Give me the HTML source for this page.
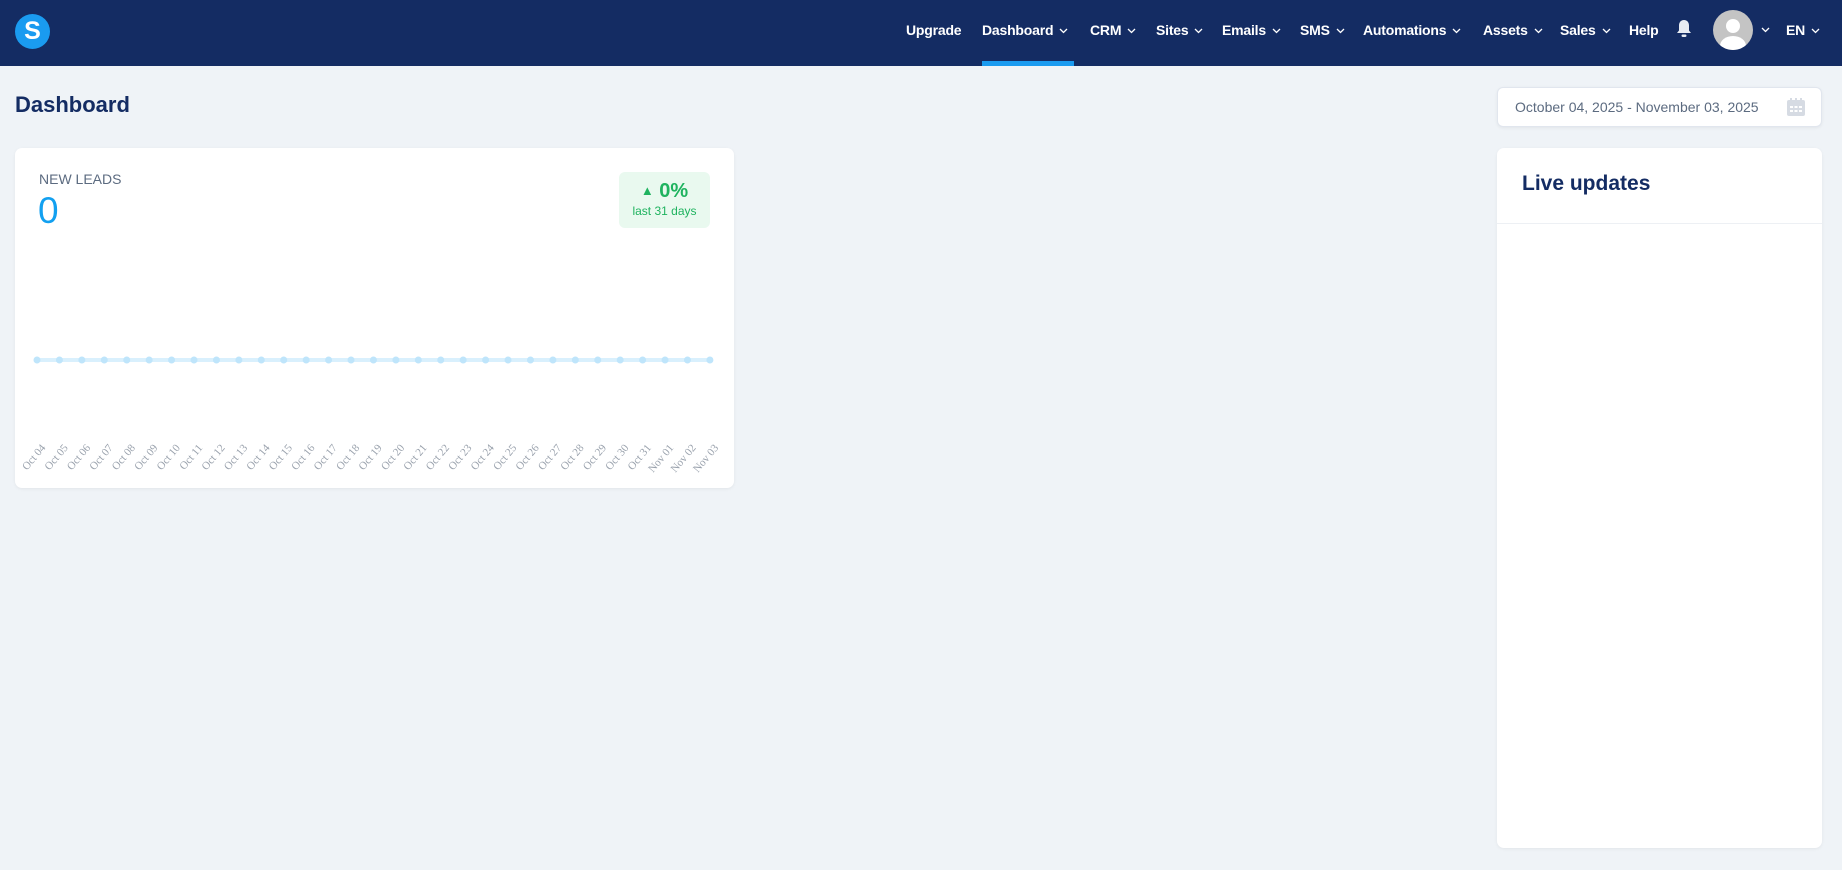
<!DOCTYPE html>
<html><head><meta charset="utf-8"><style>
*{margin:0;padding:0;box-sizing:border-box}
body{width:1842px;height:870px;background:#eff3f7;font-family:"Liberation Sans",sans-serif;position:relative;overflow:hidden}
.nav{position:absolute;left:0;top:0;width:1842px;height:66px;background:#142c63}
.logo{position:absolute;left:15px;top:14px;width:35px;height:35px;border-radius:50%;background:#1a9bf0;color:#fff;font-weight:bold;font-size:25px;text-align:center;line-height:35px}
.ni{position:absolute;top:20px;color:#fff;font-weight:bold;font-size:14px;line-height:20px;white-space:nowrap;letter-spacing:-0.2px}
.ni svg{vertical-align:middle;margin-left:6px}
.ul{position:absolute;left:982px;top:61px;width:92px;height:5px;background:#1a9bf0}
h1{position:absolute;left:15px;top:92px;font-size:22px;color:#142c63;font-weight:bold}
.card{position:absolute;background:#fff;border-radius:7px;box-shadow:0 1px 3px rgba(0,0,0,.06)}
</style></head><body>
<div class="nav">
<div class="logo">S</div>
<div class="ni" style="left:906px">Upgrade</div>
<div class="ni" style="left:982px">Dashboard<svg width="9" height="6"><path d="M1 1l3.5 3.5L8 1" stroke="#fff" fill="none" stroke-width="1.3"/></svg></div>
<div class="ni" style="left:1090px">CRM<svg width="9" height="6"><path d="M1 1l3.5 3.5L8 1" stroke="#fff" fill="none" stroke-width="1.3"/></svg></div>
<div class="ni" style="left:1156px">Sites<svg width="9" height="6"><path d="M1 1l3.5 3.5L8 1" stroke="#fff" fill="none" stroke-width="1.3"/></svg></div>
<div class="ni" style="left:1222px">Emails<svg width="9" height="6"><path d="M1 1l3.5 3.5L8 1" stroke="#fff" fill="none" stroke-width="1.3"/></svg></div>
<div class="ni" style="left:1300px">SMS<svg width="9" height="6"><path d="M1 1l3.5 3.5L8 1" stroke="#fff" fill="none" stroke-width="1.3"/></svg></div>
<div class="ni" style="left:1363px">Automations<svg width="9" height="6"><path d="M1 1l3.5 3.5L8 1" stroke="#fff" fill="none" stroke-width="1.3"/></svg></div>
<div class="ni" style="left:1483px">Assets<svg width="9" height="6"><path d="M1 1l3.5 3.5L8 1" stroke="#fff" fill="none" stroke-width="1.3"/></svg></div>
<div class="ni" style="left:1560px">Sales<svg width="9" height="6"><path d="M1 1l3.5 3.5L8 1" stroke="#fff" fill="none" stroke-width="1.3"/></svg></div>
<div class="ni" style="left:1629px">Help</div>
<svg style="position:absolute;left:1676px;top:19px" width="16" height="20" viewBox="0 0 16 20"><path d="M8 1c-3.3 0-5 2.6-5 5.5v5L1 14h14l-2-2.5v-5C13 3.6 11.3 1 8 1z" fill="#e8ecf3"/><rect x="5.5" y="15.5" width="5" height="2.5" rx="1.2" fill="#e8ecf3"/></svg>
<svg style="position:absolute;left:1713px;top:10px" width="40" height="40" viewBox="0 0 40 40"><clipPath id="c"><circle cx="20" cy="20" r="20"/></clipPath><g clip-path="url(#c)"><rect width="40" height="40" fill="#c4c4c4"/><circle cx="20" cy="16" r="7" fill="#fff"/><ellipse cx="20" cy="36" rx="13" ry="10" fill="#fff"/></g></svg>
<svg style="position:absolute;left:1761px;top:27px" width="9" height="6"><path d="M1 1l3.5 3.5L8 1" stroke="#fff" fill="none" stroke-width="1.3"/></svg>
<div class="ni" style="left:1786px">EN<svg width="9" height="6"><path d="M1 1l3.5 3.5L8 1" stroke="#fff" fill="none" stroke-width="1.3"/></svg></div>
<div class="ul"></div>
</div>
<h1>Dashboard</h1>
<div class="card" style="left:1497px;top:87px;width:325px;height:40px;border:1px solid #e1e6ee;border-radius:6px">
<div style="position:absolute;left:17px;top:11px;font-size:14px;color:#5c6b80">October 04, 2025 - November 03, 2025</div>
<svg style="position:absolute;left:288px;top:9px" width="20" height="20" viewBox="0 0 20 20"><rect x="1" y="3" width="18" height="16" rx="2" fill="#d6dbe3"/><rect x="4" y="1" width="2" height="4" fill="#d6dbe3"/><rect x="9" y="1" width="2" height="4" fill="#d6dbe3"/><rect x="14" y="1" width="2" height="4" fill="#d6dbe3"/><g fill="#fff"><rect x="4" y="9" width="3" height="2"/><rect x="8.5" y="9" width="3" height="2"/><rect x="13" y="9" width="3" height="2"/><rect x="4" y="13" width="3" height="2"/><rect x="8.5" y="13" width="3" height="2"/><rect x="13" y="13" width="3" height="2"/></g></svg>
</div>
<div class="card" style="left:1497px;top:148px;width:325px;height:700px">
<div style="position:absolute;left:25px;top:24px;font-size:21px;font-weight:bold;color:#142c63">Live updates</div>
<div style="position:absolute;left:0;top:75px;width:100%;height:1px;background:#edf0f4"></div>
</div>
<div class="card" style="left:15px;top:148px;width:719px;height:340px">
<div style="position:absolute;left:24px;top:23px;font-size:14px;color:#5c6b80">NEW LEADS</div>
<div style="position:absolute;left:23px;top:42px;font-size:37px;color:#12a0f0">0</div>
<div style="position:absolute;left:604px;top:24px;width:91px;height:56px;background:#e9f9ef;border-radius:6px;text-align:center;color:#1fb35f">
<div style="margin-top:8px;font-size:20px;font-weight:bold"><span style="font-size:13px;vertical-align:2px">▲</span> 0%</div>
<div style="font-size:12px;margin-top:1px">last 31 days</div></div>
</div>
<svg style="position:absolute;left:0;top:0" width="740" height="490">
<line x1="37" y1="360" x2="710" y2="360" stroke="#d9f0fd" stroke-width="4"/>
<g id="pts" fill="#bfe5fb"></g>
<g id="lbl" font-family="Liberation Serif,serif" font-size="11" fill="#9aa2ad" text-anchor="end"></g>
</svg>
<script>
var m=["Oct 04","Oct 05","Oct 06","Oct 07","Oct 08","Oct 09","Oct 10","Oct 11","Oct 12","Oct 13","Oct 14","Oct 15","Oct 16","Oct 17","Oct 18","Oct 19","Oct 20","Oct 21","Oct 22","Oct 23","Oct 24","Oct 25","Oct 26","Oct 27","Oct 28","Oct 29","Oct 30","Oct 31","Nov 01","Nov 02","Nov 03"];
var p="",l="";
for(var i=0;i<31;i++){var x=37+i*22.43;p+='<circle cx="'+x+'" cy="360" r="3.5"/>';var tx=x+9,ty=448;l+='<text x="'+tx+'" y="'+ty+'" transform="rotate(-50 '+tx+' '+ty+')">'+m[i]+'</text>';}
document.getElementById("pts").innerHTML=p;document.getElementById("lbl").innerHTML=l;
</script>
</body></html>
